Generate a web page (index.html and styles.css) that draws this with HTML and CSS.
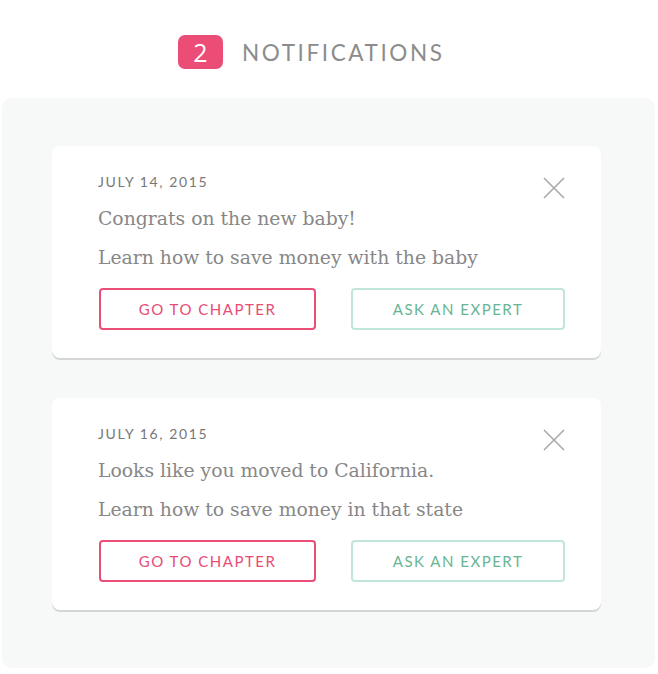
FILE: index.html
```html
<!DOCTYPE html>
<html>
<head>
<meta charset="utf-8">
<link rel="stylesheet" href="styles.css">
</head>
<body>
<header class="head">
  <span class="badge">2</span>
  <h1 class="title">NOTIFICATIONS</h1>
</header>
<main class="panel">
  <article class="card">
    <div class="date">JULY 14, 2015</div>
    <button class="close" aria-label="Close"><svg width="24" height="24" viewBox="0 0 24 24"><path d="M2 2 L22 22 M22 2 L2 22" stroke="#a9a9a9" stroke-width="1.6" fill="none"/></svg></button>
    <p class="line">Congrats on the new baby!</p>
    <p class="line">Learn how to save money with the baby</p>
    <div class="actions">
      <a class="btn btn-pink">GO TO CHAPTER</a>
      <a class="btn btn-green">ASK AN EXPERT</a>
    </div>
  </article>
  <article class="card">
    <div class="date">JULY 16, 2015</div>
    <button class="close" aria-label="Close"><svg width="24" height="24" viewBox="0 0 24 24"><path d="M2 2 L22 22 M22 2 L2 22" stroke="#a9a9a9" stroke-width="1.6" fill="none"/></svg></button>
    <p class="line">Looks like you moved to California.</p>
    <p class="line">Learn how to save money in that state</p>
    <div class="actions">
      <a class="btn btn-pink">GO TO CHAPTER</a>
      <a class="btn btn-green">ASK AN EXPERT</a>
    </div>
  </article>
</main>
</body>
</html>
```
FILE: styles.css
```css
html, body { margin: 0; padding: 0; background: #ffffff; }
body { width: 658px; height: 674px; overflow: hidden; font-family: "DejaVu Sans", sans-serif; }

.head {
  display: flex;
  align-items: center;
  height: 34px;
  margin: 35px 0 0 178px;
}
.badge {
  width: 45px;
  height: 34px;
  border-radius: 7px;
  background: #ec4d76;
  color: #fff;
  font-family: "Open Sans", sans-serif;
  font-size: 25px;
  line-height: 34px;
  text-align: center;
}
.title {
  margin: 0 0 0 19px;
  font-family: "Lato", sans-serif;
  font-weight: 400;
  font-size: 22.5px;
  letter-spacing: 2.6px;
  color: #8c8c8c;
}

.panel {
  margin: 29px 3px 0 2px;
  height: 570px;
  box-sizing: border-box;
  padding: 48px 54px 0 50px;
  background: #f7f9f8;
  border-radius: 10px;
  display: flex;
  flex-direction: column;
  gap: 40px;
}
.card {
  position: relative;
  background: #fff;
  border-radius: 8px;
  box-shadow: 0 2px 0 #d4d6d5;
  padding: 28px 36px 28px 46px;
  height: 212px;
  box-sizing: border-box;
}
.date {
  font-family: "Lato", sans-serif;
  font-size: 14px;
  letter-spacing: 1.6px;
  color: #777;
  line-height: 16px;
}
.close {
  position: absolute;
  top: 30px;
  right: 35px;
  border: 0;
  padding: 0;
  background: none;
  width: 24px;
  height: 24px;
}
.line {
  margin: 0;
  font-family: "DejaVu Serif", serif;
  font-size: 18.8px;
  color: #878787;
  line-height: 39px;
}
.line:first-of-type { margin-top: 9px; }
.actions {
  display: flex;
  justify-content: space-between;
  margin-top: 11px;
}
.btn {
  width: 217px;
  height: 42px;
  box-sizing: border-box;
  border-radius: 4px;
  display: flex;
  align-items: center;
  justify-content: center;
  font-family: "Lato", sans-serif;
  font-size: 15px;
  letter-spacing: 1.5px;
}
.btn-pink { border: 2px solid #ea4e77; color: #e74c75; margin-left: 1px; }
.btn-green { border: 2px solid #c2e5d9; color: #68b593; width: 214px; }
```
